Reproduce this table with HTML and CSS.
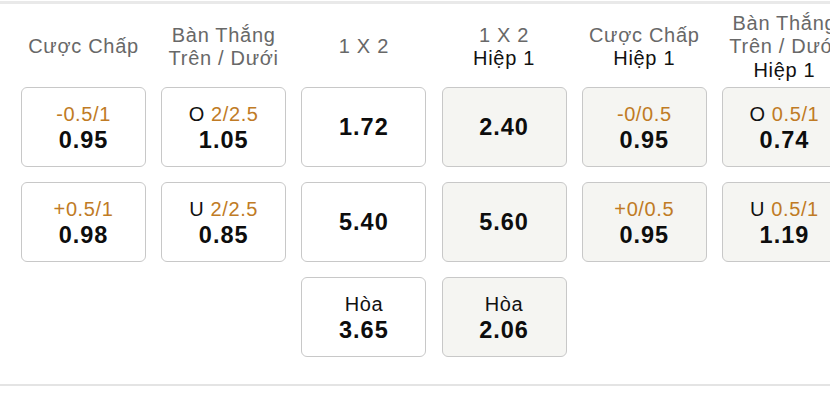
FILE: index.html
```html
<!DOCTYPE html>
<html lang="vi">
<head>
<meta charset="utf-8">
<title>Kèo</title>
<link rel="stylesheet" href="styles.css">
</head>
<body>
<div class="odds">
  <div class="col">
    <div class="head"><span>Cược Chấp</span></div>
    <div class="cells">
      <div class="cell"><span class="line"><span class="hc">-0.5/1</span></span><span class="val">0.95</span></div>
      <div class="cell"><span class="line"><span class="hc">+0.5/1</span></span><span class="val">0.98</span></div>
    </div>
  </div>
  <div class="col">
    <div class="head"><span>Bàn Thắng</span><span>Trên / Dưới</span></div>
    <div class="cells">
      <div class="cell"><span class="line">O <span class="hc">2/2.5</span></span><span class="val">1.05</span></div>
      <div class="cell"><span class="line">U <span class="hc">2/2.5</span></span><span class="val">0.85</span></div>
    </div>
  </div>
  <div class="col">
    <div class="head"><span>1 X 2</span></div>
    <div class="cells">
      <div class="cell"><span class="val">1.72</span></div>
      <div class="cell"><span class="val">5.40</span></div>
      <div class="cell"><span class="line">Hòa</span><span class="val">3.65</span></div>
    </div>
  </div>
  <div class="col alt">
    <div class="head"><span>1 X 2</span><span class="half">Hiệp 1</span></div>
    <div class="cells">
      <div class="cell"><span class="val">2.40</span></div>
      <div class="cell"><span class="val">5.60</span></div>
      <div class="cell"><span class="line">Hòa</span><span class="val">2.06</span></div>
    </div>
  </div>
  <div class="col alt">
    <div class="head"><span>Cược Chấp</span><span class="half">Hiệp 1</span></div>
    <div class="cells">
      <div class="cell"><span class="line"><span class="hc">-0/0.5</span></span><span class="val">0.95</span></div>
      <div class="cell"><span class="line"><span class="hc">+0/0.5</span></span><span class="val">0.95</span></div>
    </div>
  </div>
  <div class="col alt">
    <div class="head"><span>Bàn Thắng</span><span>Trên / Dưới</span><span class="half">Hiệp 1</span></div>
    <div class="cells">
      <div class="cell"><span class="line">O <span class="hc">0.5/1</span></span><span class="val">0.74</span></div>
      <div class="cell"><span class="line">U <span class="hc">0.5/1</span></span><span class="val">1.19</span></div>
    </div>
  </div>
</div>
</body>
</html>
```
FILE: styles.css
```css
html, body {
  margin: 0;
  padding: 0;
  background: #ffffff;
  overflow: hidden;
}
body {
  font-family: "Liberation Sans", Arial, Helvetica, sans-serif;
  color: #111111;
}
.odds {
  margin-top: 1px;
  border-top: 3px solid #e9e9e9;
  border-bottom: 2px solid #e4e4e4;
  padding: 7px 0 27px 21px;
  display: flex;
  gap: 15.2px;
  overflow: hidden;
}
.col {
  flex: 0 0 125px;
  display: flex;
  flex-direction: column;
}
.head {
  height: 72px;
  display: flex;
  flex-direction: column;
  justify-content: center;
  align-items: center;
  text-align: center;
  font-size: 20px;
  line-height: 23.5px;
  letter-spacing: 0.7px;
  color: #686868;
  white-space: nowrap;
}
.head .half {
  color: #111111;
}
.cells {
  margin-top: 4px;
  display: flex;
  flex-direction: column;
  gap: 15px;
}
.cell {
  height: 80px;
  box-sizing: border-box;
  border: 1.5px solid #c8c8c8;
  border-radius: 6px;
  background: #ffffff;
  display: flex;
  flex-direction: column;
  justify-content: center;
  align-items: center;
  white-space: nowrap;
}
.alt .cell {
  background: #f5f5f2;
}
.line {
  font-size: 20px;
  line-height: 26px;
  letter-spacing: 0.6px;
  color: #111111;
}
.hc {
  color: #c07b25;
}
.val {
  font-size: 23.5px;
  line-height: 26px;
  font-weight: bold;
  letter-spacing: 1px;
  color: #0d0d0d;
}
```
